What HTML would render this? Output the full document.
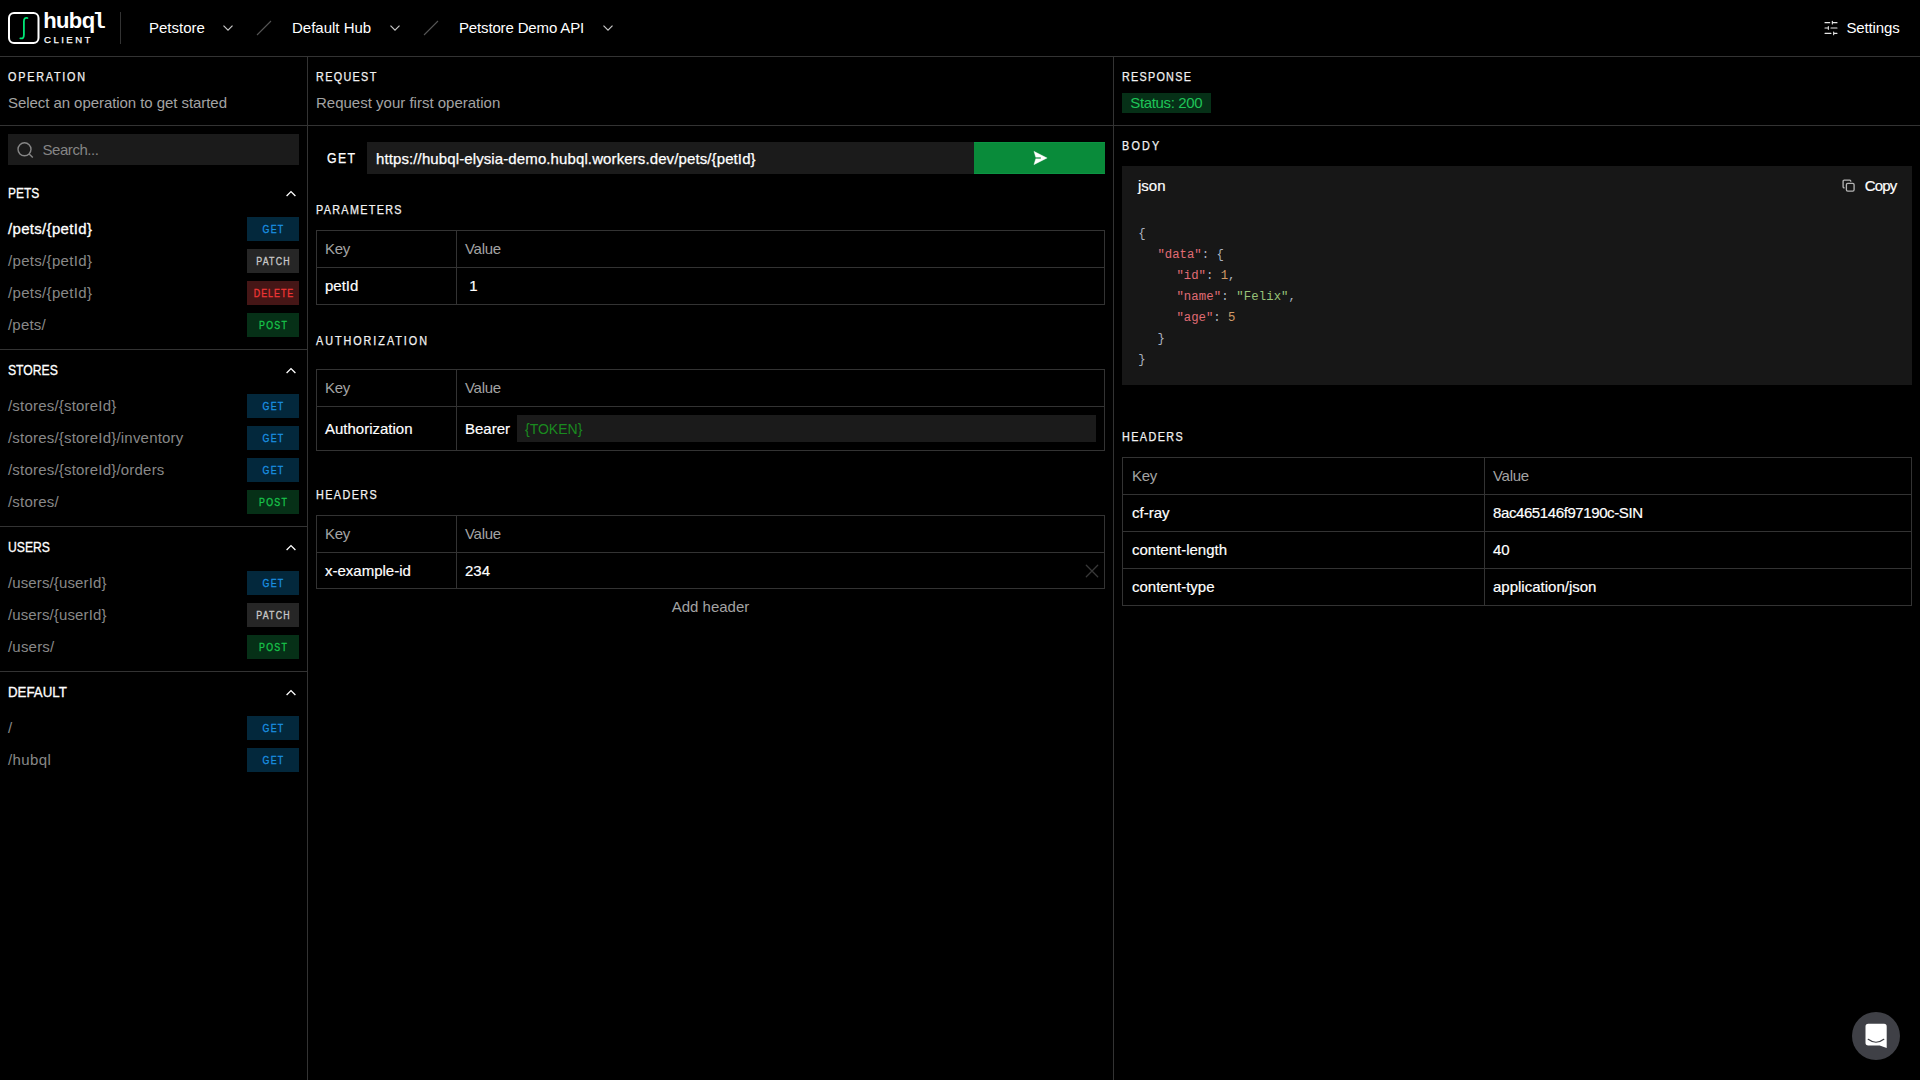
<!DOCTYPE html>
<html lang="en">
<head>
<meta charset="utf-8">
<title>hubql client</title>
<style>
*{box-sizing:border-box;margin:0;padding:0}
html,body{width:1920px;height:1080px;overflow:hidden;background:#000;color:#fff;font-family:"Liberation Sans",sans-serif;font-size:15px}
.abs{position:absolute}
#app{position:relative;width:1920px;height:1080px;overflow:hidden}
/* header */
#hdr{position:absolute;left:0;top:0;width:1920px;height:57px;border-bottom:1px solid #333}
#logo{position:absolute;left:8px;top:12px;width:32px;height:32px}
#brand{position:absolute;left:43.3px;top:9px;font-weight:bold;font-size:22px;line-height:24px;letter-spacing:-0.65px;white-space:nowrap}
#brand i{font-style:normal;font-family:"Liberation Mono",monospace;margin-left:-2px}
#brand2{position:absolute;left:44px;top:34px;font-size:9.6px;line-height:12px;letter-spacing:2.45px;-webkit-text-stroke:0.25px #fff;white-space:nowrap}
#hdiv{position:absolute;left:120px;top:12px;width:1px;height:32px;background:#333}
.nav{position:absolute;top:18px;font-size:15px;line-height:20px;white-space:nowrap;color:#fff}
.chev{position:absolute;top:24px;width:12px;height:8px}
.slash{position:absolute;top:20px;width:16px;height:16px}
/* columns */
#c1{position:absolute;left:0;top:57px;width:308px;height:1023px;border-right:1px solid #333}
#c2{position:absolute;left:308px;top:57px;width:806px;height:1023px;border-right:1px solid #333}
#c3{position:absolute;left:1114px;top:57px;width:806px;height:1023px}
.sub{position:absolute;left:0;top:0;right:0;height:69px;border-bottom:1px solid #333}
.ttl{transform:scaleX(0.9);transform-origin:0 50%;position:absolute;left:8px;font-size:12px;line-height:16px;letter-spacing:0.75px;-webkit-text-stroke:0.25px #f2f2f2;color:#f2f2f2;white-space:nowrap}
.sub .ttl{top:12px}
.desc{position:absolute;left:8px;top:36px;font-size:15px;line-height:20px;color:#a3a3a3;white-space:nowrap;letter-spacing:-0.06px}

/* sidebar */
#search{position:absolute;left:8px;top:77px;width:291px;height:31px;background:#1b1b1b}
#search svg{position:absolute;left:8px;top:7px;width:18px;height:18px}
#search span{position:absolute;left:34.5px;top:6px;font-size:15px;line-height:20px;color:#858585;white-space:nowrap;letter-spacing:-0.45px}
.sec{position:absolute;left:0;width:307px;border-top:1px solid #333}
.sec.first{border-top-color:transparent}
.sec h3{position:absolute;left:8.2px;top:10px;font-size:14px;line-height:20px;font-weight:normal;color:#fff;-webkit-text-stroke:0.3px #fff;white-space:nowrap;transform-origin:0 50%}
.sec .up{position:absolute;left:285px;top:15.5px;width:12px;height:9px}
.op{position:absolute;left:0;width:307px;height:24px}
.op .p{position:absolute;left:8px;top:1px;font-size:15px;line-height:22px;color:#888;white-space:nowrap;letter-spacing:0.2px}
.op.on .p{color:#fff;-webkit-text-stroke:0.3px #fff}
.bd{position:absolute;left:247px;top:0;width:52px;height:24px;font-size:10px;line-height:25px;text-align:center}
.bd i{display:inline-block;font-style:normal;transform:scaleX(0.88);-webkit-text-stroke:0.32px currentColor}
.get{background:#03283c;color:#1a8fe0}
.patch{background:#262626;color:#c8c8c8}
.delete{background:#451616;color:#ee3535}
.post{background:#063017;color:#18c24a}

/* request column (coords relative to #c2: left 308, top 57) */
#method{position:absolute;left:19px;top:91px;font-size:14px;line-height:20px;letter-spacing:1.5px;-webkit-text-stroke:0.25px #fff;color:#fff;white-space:nowrap;transform:scaleX(0.88);transform-origin:0 50%}
#url{position:absolute;left:59px;top:85px;width:607px;height:32px;background:#1b1b1b}
#url span{position:absolute;left:9px;top:7px;font-size:15px;line-height:20px;color:#fff;white-space:nowrap;letter-spacing:0.11px;-webkit-text-stroke:0.25px #fff}
#send{position:absolute;left:666px;top:85px;width:131px;height:32px;background:#098b3a;border-top:1px solid #0c9443;border-bottom:1px solid #0c9443}
#send svg{position:absolute;left:57px;top:7px;width:17px;height:16px}
.h4{transform:scaleX(0.9);transform-origin:0 50%;position:absolute;font-size:12px;line-height:16px;letter-spacing:0.75px;-webkit-text-stroke:0.25px #f2f2f2;color:#f2f2f2;white-space:nowrap}
.tbl{position:absolute;border:1px solid #333}
.tbl .r{position:absolute;left:0;right:0;border-top:1px solid #333}
.tbl .r:first-child{border-top:0}
.tbl .v{position:absolute;top:0;bottom:0;width:1px;background:#333}
.tbl .k,.tbl .val{position:absolute;font-size:15px;line-height:20px;white-space:nowrap;color:#fff}
.tbl .k,.tbl .val{-webkit-text-stroke:0.18px #fff}
.tbl .hd{color:#a3a3a3;-webkit-text-stroke:0;letter-spacing:-0.3px}
#tok{position:absolute;left:200px;top:8px;width:579px;height:27px;background:#1b1b1b}
#tok span{position:absolute;left:8px;top:4px;font-size:14px;line-height:20px;color:#1a8a1f;white-space:nowrap}
#addh{position:absolute;left:8px;width:789px;top:540px;text-align:center;font-size:15px;line-height:20px;color:#a3a3a3}

/* response column (coords relative to #c3: left 1114, top 57) */
#status{position:absolute;left:8px;top:36px;width:89px;height:20px;background:#063017;color:#1fc457;font-size:15px;line-height:20px;text-align:center;white-space:nowrap;letter-spacing:-0.35px;text-indent:-0.35px}
#code{position:absolute;left:8px;top:109px;width:790px;height:219px;background:#171717}
#code .lang{position:absolute;left:16px;top:10px;font-size:15px;line-height:20px;color:#fff;-webkit-text-stroke:0.18px #fff}
#code .copy{position:absolute;right:15.5px;top:10px;font-size:15px;line-height:20px;color:#fff;letter-spacing:-0.8px;-webkit-text-stroke:0.18px #fff}
#code svg{position:absolute;left:720.4px;top:13.4px;width:13.2px;height:13.2px}
#code pre{position:absolute;left:16.2px;top:58px;font-family:"Liberation Mono",monospace;font-size:12.3px;line-height:21px;color:#abb2bf}
#code pre div{height:21px;white-space:pre}
.i1{padding-left:19.2px}.i2{padding-left:38.2px}
.ck{color:#e06c75}.cn{color:#d19a66}.cs{color:#98c379}
#fab{position:absolute;left:1852px;top:1012px;width:48px;height:48px;border-radius:50%;background:#3f4046}
#fab svg{position:absolute;left:0;top:0;width:48px;height:48px}
</style>
</head>
<body>
<div id="app">
  <div id="hdr">
    <svg id="logo" viewBox="0 0 32 32" fill="none">
      <rect x="1" y="1" width="29.5" height="30" rx="5" stroke="#fff" stroke-width="2"/>
      <path d="M12.3 26.3c2.6.6 3.6-.6 3.6-3.6V9.6c0-3 1.2-4.2 3.6-3.6" stroke="#00e676" stroke-width="1.8" stroke-linecap="round"/>
    </svg>
    <div id="brand">hubq<i>l</i></div>
    <div id="brand2">CLIENT</div>
    <div id="hdiv"></div>
    <div class="nav" style="left:149px">Petstore</div>
    <svg class="chev" style="left:222px" viewBox="0 0 12 8" fill="none"><path d="M1.5 1.7 6 6.2l4.5-4.5" stroke="#c8c8c8" stroke-width="1.2"/></svg>
    <svg class="slash" style="left:256px" viewBox="0 0 16 16" fill="none"><path d="M1 15 15 1" stroke="#555" stroke-width="1.1"/></svg>
    <div class="nav" style="left:292px">Default Hub</div>
    <svg class="chev" style="left:389px" viewBox="0 0 12 8" fill="none"><path d="M1.5 1.7 6 6.2l4.5-4.5" stroke="#c8c8c8" stroke-width="1.2"/></svg>
    <svg class="slash" style="left:423px" viewBox="0 0 16 16" fill="none"><path d="M1 15 15 1" stroke="#555" stroke-width="1.1"/></svg>
    <div class="nav" style="left:459px;letter-spacing:-0.15px">Petstore Demo API</div>
    <svg class="chev" style="left:602px" viewBox="0 0 12 8" fill="none"><path d="M1.5 1.7 6 6.2l4.5-4.5" stroke="#c8c8c8" stroke-width="1.2"/></svg>
    <svg class="abs" style="left:1823px;top:20px;width:16px;height:16px" viewBox="0 0 24 24" fill="none" stroke="#e6e6e6" stroke-width="1.7" stroke-linecap="round"><path d="M21 4h-7M10 4H3M21 12h-9M8 12H3M21 20h-5M12 20H3M14 2v4M8 10v4M16 18v4"/></svg>
    <div class="nav" style="left:1846.5px;letter-spacing:-0.15px">Settings</div>
  </div>

  <div id="c1">
    <div class="sub"><div class="ttl" style="letter-spacing:1.98px">OPERATION</div><div class="desc">Select an operation to get started</div></div>
    <div id="search"><svg viewBox="0 0 18 18" fill="none"><circle cx="8.5" cy="8.3" r="6.5" stroke="#868686" stroke-width="1.4"/><path d="M13.2 13 16.8 16.6" stroke="#868686" stroke-width="1.4"/></svg><span>Search...</span></div>
    <div class="sec first" style="top:115px;height:177px">
      <h3 style="transform:scaleX(0.855)">PETS</h3><svg class="up" viewBox="0 0 12 9" fill="none"><path d="M1.6 7 6 2.6 10.4 7" stroke="#fff" stroke-width="1.3"/></svg>
      <div class="op on" style="top:44px"><span class="p" style="letter-spacing:0.32px">/pets/{petId}</span><span class="bd get"><i style="letter-spacing:1.5px;margin-right:-1.5px">GET</i></span></div>
      <div class="op" style="top:76px"><span class="p" style="letter-spacing:0.32px">/pets/{petId}</span><span class="bd patch"><i style="letter-spacing:1.33px;margin-right:-1.33px">PATCH</i></span></div>
      <div class="op" style="top:108px"><span class="p" style="letter-spacing:0.32px">/pets/{petId}</span><span class="bd delete"><i style="letter-spacing:1.18px;margin-right:-1.18px">DELETE</i></span></div>
      <div class="op" style="top:140px"><span class="p">/pets/</span><span class="bd post"><i style="letter-spacing:1.5px;margin-right:-1.5px">POST</i></span></div>
    </div>
    <div class="sec" style="top:292px;height:177px">
      <h3 style="transform:scaleX(0.87)">STORES</h3><svg class="up" viewBox="0 0 12 9" fill="none"><path d="M1.6 7 6 2.6 10.4 7" stroke="#fff" stroke-width="1.3"/></svg>
      <div class="op" style="top:44px"><span class="p">/stores/{storeId}</span><span class="bd get"><i style="letter-spacing:1.5px;margin-right:-1.5px">GET</i></span></div>
      <div class="op" style="top:76px"><span class="p">/stores/{storeId}/inventory</span><span class="bd get"><i style="letter-spacing:1.5px;margin-right:-1.5px">GET</i></span></div>
      <div class="op" style="top:108px"><span class="p">/stores/{storeId}/orders</span><span class="bd get"><i style="letter-spacing:1.5px;margin-right:-1.5px">GET</i></span></div>
      <div class="op" style="top:140px"><span class="p">/stores/</span><span class="bd post"><i style="letter-spacing:1.5px;margin-right:-1.5px">POST</i></span></div>
    </div>
    <div class="sec" style="top:469px;height:145px">
      <h3 style="transform:scaleX(0.87)">USERS</h3><svg class="up" viewBox="0 0 12 9" fill="none"><path d="M1.6 7 6 2.6 10.4 7" stroke="#fff" stroke-width="1.3"/></svg>
      <div class="op" style="top:44px"><span class="p" style="letter-spacing:0.12px">/users/{userId}</span><span class="bd get"><i style="letter-spacing:1.5px;margin-right:-1.5px">GET</i></span></div>
      <div class="op" style="top:76px"><span class="p" style="letter-spacing:0.12px">/users/{userId}</span><span class="bd patch"><i style="letter-spacing:1.33px;margin-right:-1.33px">PATCH</i></span></div>
      <div class="op" style="top:108px"><span class="p">/users/</span><span class="bd post"><i style="letter-spacing:1.5px;margin-right:-1.5px">POST</i></span></div>
    </div>
    <div class="sec" style="top:614px;height:113px">
      <h3 style="transform:scaleX(0.95)">DEFAULT</h3><svg class="up" viewBox="0 0 12 9" fill="none"><path d="M1.6 7 6 2.6 10.4 7" stroke="#fff" stroke-width="1.3"/></svg>
      <div class="op" style="top:44px"><span class="p">/</span><span class="bd get"><i style="letter-spacing:1.5px;margin-right:-1.5px">GET</i></span></div>
      <div class="op" style="top:76px"><span class="p" style="letter-spacing:0.4px">/hubql</span><span class="bd get"><i style="letter-spacing:1.5px;margin-right:-1.5px">GET</i></span></div>
    </div>
  </div>
  <div id="c2">
    <div class="sub"><div class="ttl" style="letter-spacing:1.49px">REQUEST</div><div class="desc" style="letter-spacing:0">Request your first operation</div></div>
    <div id="method">GET</div>
    <div id="url"><span>https://hubql-elysia-demo.hubql.workers.dev/pets/{petId}</span></div>
    <div id="send"><svg viewBox="0 0 17 16"><path d="M2.9 1.3 16.2 8 2.9 14.7 4.7 8.75H9.9V7.25H4.7Z" fill="#fff" stroke="#fff" stroke-width="0.3" stroke-linejoin="round"/></svg></div>
    <div class="h4" style="left:8px;top:145px;letter-spacing:1.47px">PARAMETERS</div>
    <div class="tbl" style="left:8px;top:173px;width:789px;height:75px">
      <div class="r" style="top:0px;height:36px"><span class="k hd" style="left:8px;top:8px">Key</span><span class="val hd" style="left:148px;top:8px">Value</span></div>
      <div class="r" style="top:36px;height:37px"><span class="k" style="left:8px;top:8px">petId</span><span class="val" style="left:148px;top:8px"><span style="padding-left:4.3px">1</span></span></div>
      <div class="v" style="left:139px"></div>
    </div>
    <div class="h4" style="left:8px;top:276px;letter-spacing:2.18px">AUTHORIZATION</div>
    <div class="tbl" style="left:8px;top:312px;width:789px;height:82px">
      <div class="r" style="top:0px;height:36px"><span class="k hd" style="left:8px;top:8px">Key</span><span class="val hd" style="left:148px;top:8px">Value</span></div>
      <div class="r" style="top:36px;height:44px"><span class="k" style="left:8px;top:12px">Authorization</span><span class="val" style="left:148px;top:12px">Bearer</span><div id="tok"><span>{TOKEN}</span></div></div>
      <div class="v" style="left:139px"></div>
    </div>
    <div class="h4" style="left:8px;top:430px;letter-spacing:1.58px">HEADERS</div>
    <div class="tbl" style="left:8px;top:458px;width:789px;height:74px">
      <div class="r" style="top:0px;height:36px"><span class="k hd" style="left:8px;top:8px">Key</span><span class="val hd" style="left:148px;top:8px">Value</span></div>
      <div class="r" style="top:36px;height:36px"><span class="k" style="left:8px;top:8px">x-example-id</span><span class="val" style="left:148px;top:8px">234</span><svg style="position:absolute;left:768px;top:11px;width:14px;height:14px" viewBox="0 0 14 14" fill="none"><path d="M1.300 1.300l11.400 11.400M12.700 1.300l-11.400 11.400" stroke="#383838" stroke-width="1.3" stroke-linecap="round"/></svg></div>
      <div class="v" style="left:139px"></div>
    </div>
    <div id="addh">Add header</div>
  </div>
  <div id="c3">
    <div class="sub"><div class="ttl" style="letter-spacing:1.40px">RESPONSE</div></div>
    <div id="status">Status: 200</div>
    <div class="h4" style="left:8px;top:81px;letter-spacing:2.45px">BODY</div>
    <div id="code"><span class="lang">json</span><svg viewBox="0 0 24 24" fill="none" stroke="#b4b4b4" stroke-width="2.4" stroke-linecap="round" stroke-linejoin="round"><rect x="8" y="8" width="14" height="14" rx="2.5"/><path d="M4 16c-1.1 0-2-.9-2-2V4c0-1.1.9-2 2-2h10c1.1 0 2 .9 2 2"/></svg><span class="copy">Copy</span>
<pre><div>{</div><div class="i1"><span class="ck">"data"</span>: {</div><div class="i2"><span class="ck">"id"</span>: <span class="cn">1</span>,</div><div class="i2" style="letter-spacing:0.1px"><span class="ck">"name"</span>: <span class="cs">"Felix"</span>,</div><div class="i2"><span class="ck">"age"</span>: <span class="cn">5</span></div><div class="i1">}</div><div>}</div></pre>
    </div>
    <div class="h4" style="left:8px;top:372px;letter-spacing:1.58px">HEADERS</div>
    <div class="tbl" style="left:8px;top:400px;width:790px;height:149px">
      <div class="r" style="top:0px;height:36px"><span class="k hd" style="left:9px;top:8px">Key</span><span class="val hd" style="left:370px;top:8px">Value</span></div>
      <div class="r" style="top:36px;height:37px"><span class="k" style="left:9px;top:8px">cf-ray</span><span class="val" style="left:370px;top:8px;letter-spacing:-0.4px">8ac465146f97190c-SIN</span></div>
      <div class="r" style="top:73px;height:37px"><span class="k" style="left:9px;top:8px">content-length</span><span class="val" style="left:370px;top:8px">40</span></div>
      <div class="r" style="top:110px;height:37px"><span class="k" style="left:9px;top:8px">content-type</span><span class="val" style="left:370px;top:8px">application/json</span></div>
      <div class="v" style="left:361px"></div>
    </div>
  </div>
  <div id="fab"><svg viewBox="0 0 48 48" fill="none"><path d="M16.2 11.8H32a2.7 2.7 0 0 1 2.7 2.7V35.9l-7-2.5H16.2a2.7 2.7 0 0 1-2.7-2.7V14.5a2.7 2.7 0 0 1 2.700-2.700Z" fill="#fff"/><path d="M16.2 27.3Q24 33.2 31.8 27.300" stroke="#3f4046" stroke-width="1.2" stroke-linecap="round"/></svg></div>
</div>
</body>
</html>
